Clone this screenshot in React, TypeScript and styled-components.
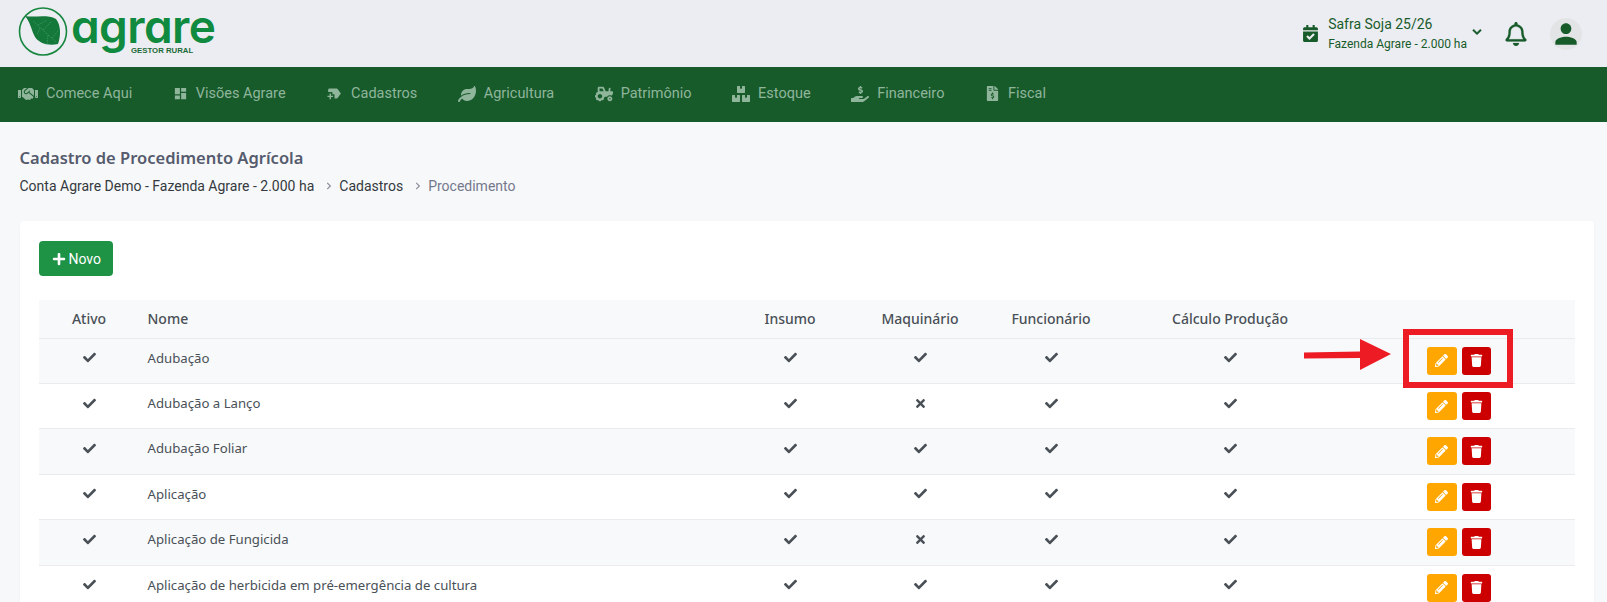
import React from 'react';
import styled, { createGlobalStyle } from 'styled-components';
import {
  FaBoxes,
  FaCalendarCheck,
  FaCheck,
  FaChevronDown,
  FaChevronRight,
  FaFileInvoiceDollar,
  FaHandHoldingUsd,
  FaHandshake,
  FaLeaf,
  FaPencilAlt,
  FaPlus,
  FaRegBell,
  FaTimes,
  FaTractor,
  FaTrash,
} from 'react-icons/fa';
import { MdDashboard, MdNewLabel, MdPerson } from 'react-icons/md';

const menu = [
  { label: 'Comece Aqui', icon: <FaHandshake size={20} /> },
  { label: 'Visões Agrare', icon: <MdDashboard size={15} /> },
  { label: 'Cadastros', icon: <MdNewLabel size={17} /> },
  { label: 'Agricultura', icon: <FaLeaf size={18} /> },
  { label: 'Patrimônio', icon: <FaTractor size={18} /> },
  { label: 'Estoque', icon: <FaBoxes size={18} /> },
  { label: 'Financeiro', icon: <FaHandHoldingUsd size={18} /> },
  { label: 'Fiscal', icon: <FaFileInvoiceDollar size={15} /> },
];

const rows = [
  { nome: 'Adubação', maquinario: true },
  { nome: 'Adubação a Lanço', maquinario: false },
  { nome: 'Adubação Foliar', maquinario: true },
  { nome: 'Aplicação', maquinario: true },
  { nome: 'Aplicação de Fungicida', maquinario: false },
  { nome: 'Aplicação de herbicida em pré-emergência de cultura', maquinario: true },
];

const Logo = () => (
  <svg width="225" height="67" viewBox="0 0 225 67">
    <circle cx="43" cy="31.5" r="23.5" fill="none" stroke="#17863f" strokeWidth="1.6" />
    <path d="M25 16 C34 18 47 14 56 19 C61 25 61 36 58 44 C49 46 38 44 34 35 C31 28 30 22 25 16 Z" fill="#13783a" />
    <path
      d="M33 21 L57 43 M43 30 L52 21 M48 35 L47 44 M38 25 L47 20 M40 28 L37 35 M52 38 L58 31"
      stroke="#5fae7c"
      strokeWidth="0.5"
      strokeDasharray="1.5 1"
      fill="none"
    />
    <text
      x="71"
      y="43"
      fontFamily="Inter, sans-serif"
      fontWeight="600"
      fontSize="46"
      letterSpacing="-0.6"
      fill="#0f8a3e"
      style={{ fontFeatureSettings: '"cv11"' }}
    >
      agrare
    </text>
    <text x="131" y="53" fontFamily="'Liberation Sans', sans-serif" fontWeight="700" fontSize="7.8" fill="#1c6b37">
      GESTOR RURAL
    </text>
  </svg>
);

const Mark = ({ on = true }: { on?: boolean }) => (on ? <FaCheck size={13} /> : <FaTimes size={13} />);

export default function App() {
  return (
    <Page>
      <GlobalStyle />
      <TopBar>
        <Logo />
        <TopActions>
          <FarmPicker>
            <CalendarIcon>
              <FaCalendarCheck size={17} />
            </CalendarIcon>
            <FarmText>
              <Season>Safra Soja 25/26</Season>
              <Farm>Fazenda Agrare - 2.000 ha</Farm>
            </FarmText>
            <Caret>
              <FaChevronDown size={10} stroke="currentColor" strokeWidth={24} />
            </Caret>
          </FarmPicker>
          <Bell>
            <FaRegBell size={24} stroke="currentColor" strokeWidth={4} />
          </Bell>
          <Avatar>
            <MdPerson size={36} />
          </Avatar>
        </TopActions>
      </TopBar>

      <Menu>
        {menu.map((item) => (
          <MenuItem key={item.label}>
            {item.icon}
            {item.label}
          </MenuItem>
        ))}
      </Menu>

      <Content>
        <Title>Cadastro de Procedimento Agrícola</Title>
        <Breadcrumb>
          <span>Conta Agrare Demo - Fazenda Agrare - 2.000 ha</span>
          <Crumb>
            <FaChevronRight size={8} />
            Cadastros
          </Crumb>
          <Crumb $current>
            <FaChevronRight size={8} />
            Procedimento
          </Crumb>
        </Breadcrumb>

        <Card>
          <NewButton>
            <FaPlus size={14} />
            Novo
          </NewButton>

          <HeadRow>
            <Cell>Ativo</Cell>
            <NameCell>Nome</NameCell>
            <Cell>Insumo</Cell>
            <Cell>Maquinário</Cell>
            <Cell>Funcionário</Cell>
            <Cell>Cálculo Produção</Cell>
            <Cell />
          </HeadRow>

          {rows.map((row, i) => (
            <BodyRow key={row.nome} $striped={i % 2 === 0}>
              <Cell>
                <Mark />
              </Cell>
              <NameCell>{row.nome}</NameCell>
              <Cell>
                <Mark />
              </Cell>
              <Cell>
                <Mark on={row.maquinario} />
              </Cell>
              <Cell>
                <Mark />
              </Cell>
              <Cell>
                <Mark />
              </Cell>
              <Actions>
                <EditButton>
                  <FaPencilAlt size={13} />
                </EditButton>
                <DeleteButton>
                  <FaTrash size={13} />
                </DeleteButton>
              </Actions>
            </BodyRow>
          ))}

          <Arrow width="90" height="32" viewBox="0 0 90 32">
            <path d="M0 13.5 L56 12.5 L56 0 L87 15 L56 31 L56 19 L0 19.5 Z" fill="#ed1c24" />
          </Arrow>
          <Highlight />
        </Card>
      </Content>
    </Page>
  );
}

const GlobalStyle = createGlobalStyle`
  html, body {
    margin: 0;
    height: 100%;
    overflow: hidden;
  }
  body {
    background: #f7f8fa;
    font-family: 'Noto Sans', 'Liberation Sans', sans-serif;
  }
`;

const Page = styled.div`
  height: 602px;
  overflow: hidden;
`;

const TopBar = styled.header`
  display: flex;
  align-items: center;
  justify-content: space-between;
  height: 67px;
  padding-right: 25px;
  background: #ecedf2;
`;

const TopActions = styled.div`
  display: flex;
  align-items: center;
`;

const FarmPicker = styled.div`
  display: flex;
  align-items: center;
  color: #185b2b;
`;

const CalendarIcon = styled.span`
  display: flex;
  margin-right: 9px;
`;

const FarmText = styled.div`
  display: flex;
  flex-direction: column;
  gap: 4px;
  font-family: Roboto, sans-serif;
`;

const Season = styled.span`
  font-size: 14px;
  line-height: 17px;
`;

const Farm = styled.span`
  font-size: 12px;
  line-height: 15px;
`;

const Caret = styled.span`
  display: flex;
  margin: 0 0 3px 5px;
`;

const Bell = styled.span`
  display: flex;
  margin-left: 22px;
  color: #185b2b;
`;

const Avatar = styled.span`
  display: flex;
  align-items: center;
  justify-content: center;
  width: 32px;
  height: 32px;
  margin-left: 22px;
  border-radius: 50%;
  background: #e3e4e6;
  color: #185b2b;
`;

const Menu = styled.nav`
  display: flex;
  align-items: center;
  gap: 40.5px;
  height: 55px;
  padding: 0 0 2px 18px;
  box-sizing: border-box;
  background: #185b2b;
`;

const MenuItem = styled.a`
  display: flex;
  align-items: center;
  gap: 8px;
  font-family: Roboto, sans-serif;
  font-size: 14.5px;
  color: #8fb59b;
`;

const Content = styled.main`
  padding: 26px 13px 0 19.5px;
`;

const Title = styled.h1`
  margin: 0;
  font-size: 16.5px;
  line-height: 20px;
  font-weight: 600;
  color: #555b6d;
`;

const Breadcrumb = styled.div`
  display: flex;
  align-items: center;
  gap: 11px;
  margin-top: 8px;
  font-family: Roboto, sans-serif;
  font-size: 14px;
  line-height: 20px;
  color: #343a40;
`;

const Crumb = styled.span<{ $current?: boolean }>`
  display: flex;
  align-items: center;
  gap: 6px;
  color: ${(p) => (p.$current ? '#74788d' : '#343a40')};

  svg {
    color: #8b8f9c;
  }
`;

const Card = styled.section`
  position: relative;
  margin-top: 25px;
  padding: 20px 19.5px;
  border-radius: 4px;
  background: #fff;
  box-shadow: 0 1px 3px rgba(18, 38, 63, 0.04);
`;

const NewButton = styled.button`
  display: flex;
  align-items: center;
  gap: 3px;
  width: 74px;
  height: 35px;
  margin-bottom: 24px;
  padding: 0 0 0 12.5px;
  border: 0;
  border-radius: 4px;
  background: #1e9245;
  color: #fff;
  font-family: Roboto, sans-serif;
  font-size: 14px;
`;

const columns = '100px 587px 128px 132px 130px 228px 231px';

const HeadRow = styled.div`
  display: grid;
  grid-template-columns: ${columns};
  align-items: center;
  height: 38.7px;
  background: #f8f9fa;
  border-bottom: 1px solid #e9ebee;
  box-sizing: border-box;
  font-size: 14px;
  font-weight: 500;
  color: #495057;
`;

const BodyRow = styled.div<{ $striped: boolean }>`
  display: grid;
  grid-template-columns: ${columns};
  align-items: start;
  height: 45.4px;
  padding-top: 10px;
  box-sizing: border-box;
  background: ${(p) => (p.$striped ? '#f8f9fa' : '#fff')};
  border-bottom: 1px solid #e9ebee;
  font-size: 13.2px;
  line-height: 18px;
  color: #495057;
`;

const Cell = styled.div`
  display: flex;
  align-items: center;
  justify-content: center;
  min-height: 18px;
`;

const NameCell = styled.div`
  padding-left: 8.5px;
`;

const Actions = styled.div`
  display: flex;
  justify-content: center;
  gap: 5px;
  margin-top: -2px;
  padding-right: 2px;
`;

const EditButton = styled.button`
  display: flex;
  align-items: center;
  justify-content: center;
  width: 30px;
  height: 28px;
  padding: 0;
  border: 0;
  border-radius: 3px;
  background: #ffa600;
  color: #fff;
`;

const DeleteButton = styled(EditButton)`
  width: 29px;
  background: #cc0000;
`;

const Arrow = styled.svg`
  position: absolute;
  left: 1284.5px;
  top: 118px;
`;

const Highlight = styled.div`
  position: absolute;
  left: 1383.5px;
  top: 108px;
  width: 110px;
  height: 59px;
  box-sizing: border-box;
  border: 6px solid #ed1c24;
`;
